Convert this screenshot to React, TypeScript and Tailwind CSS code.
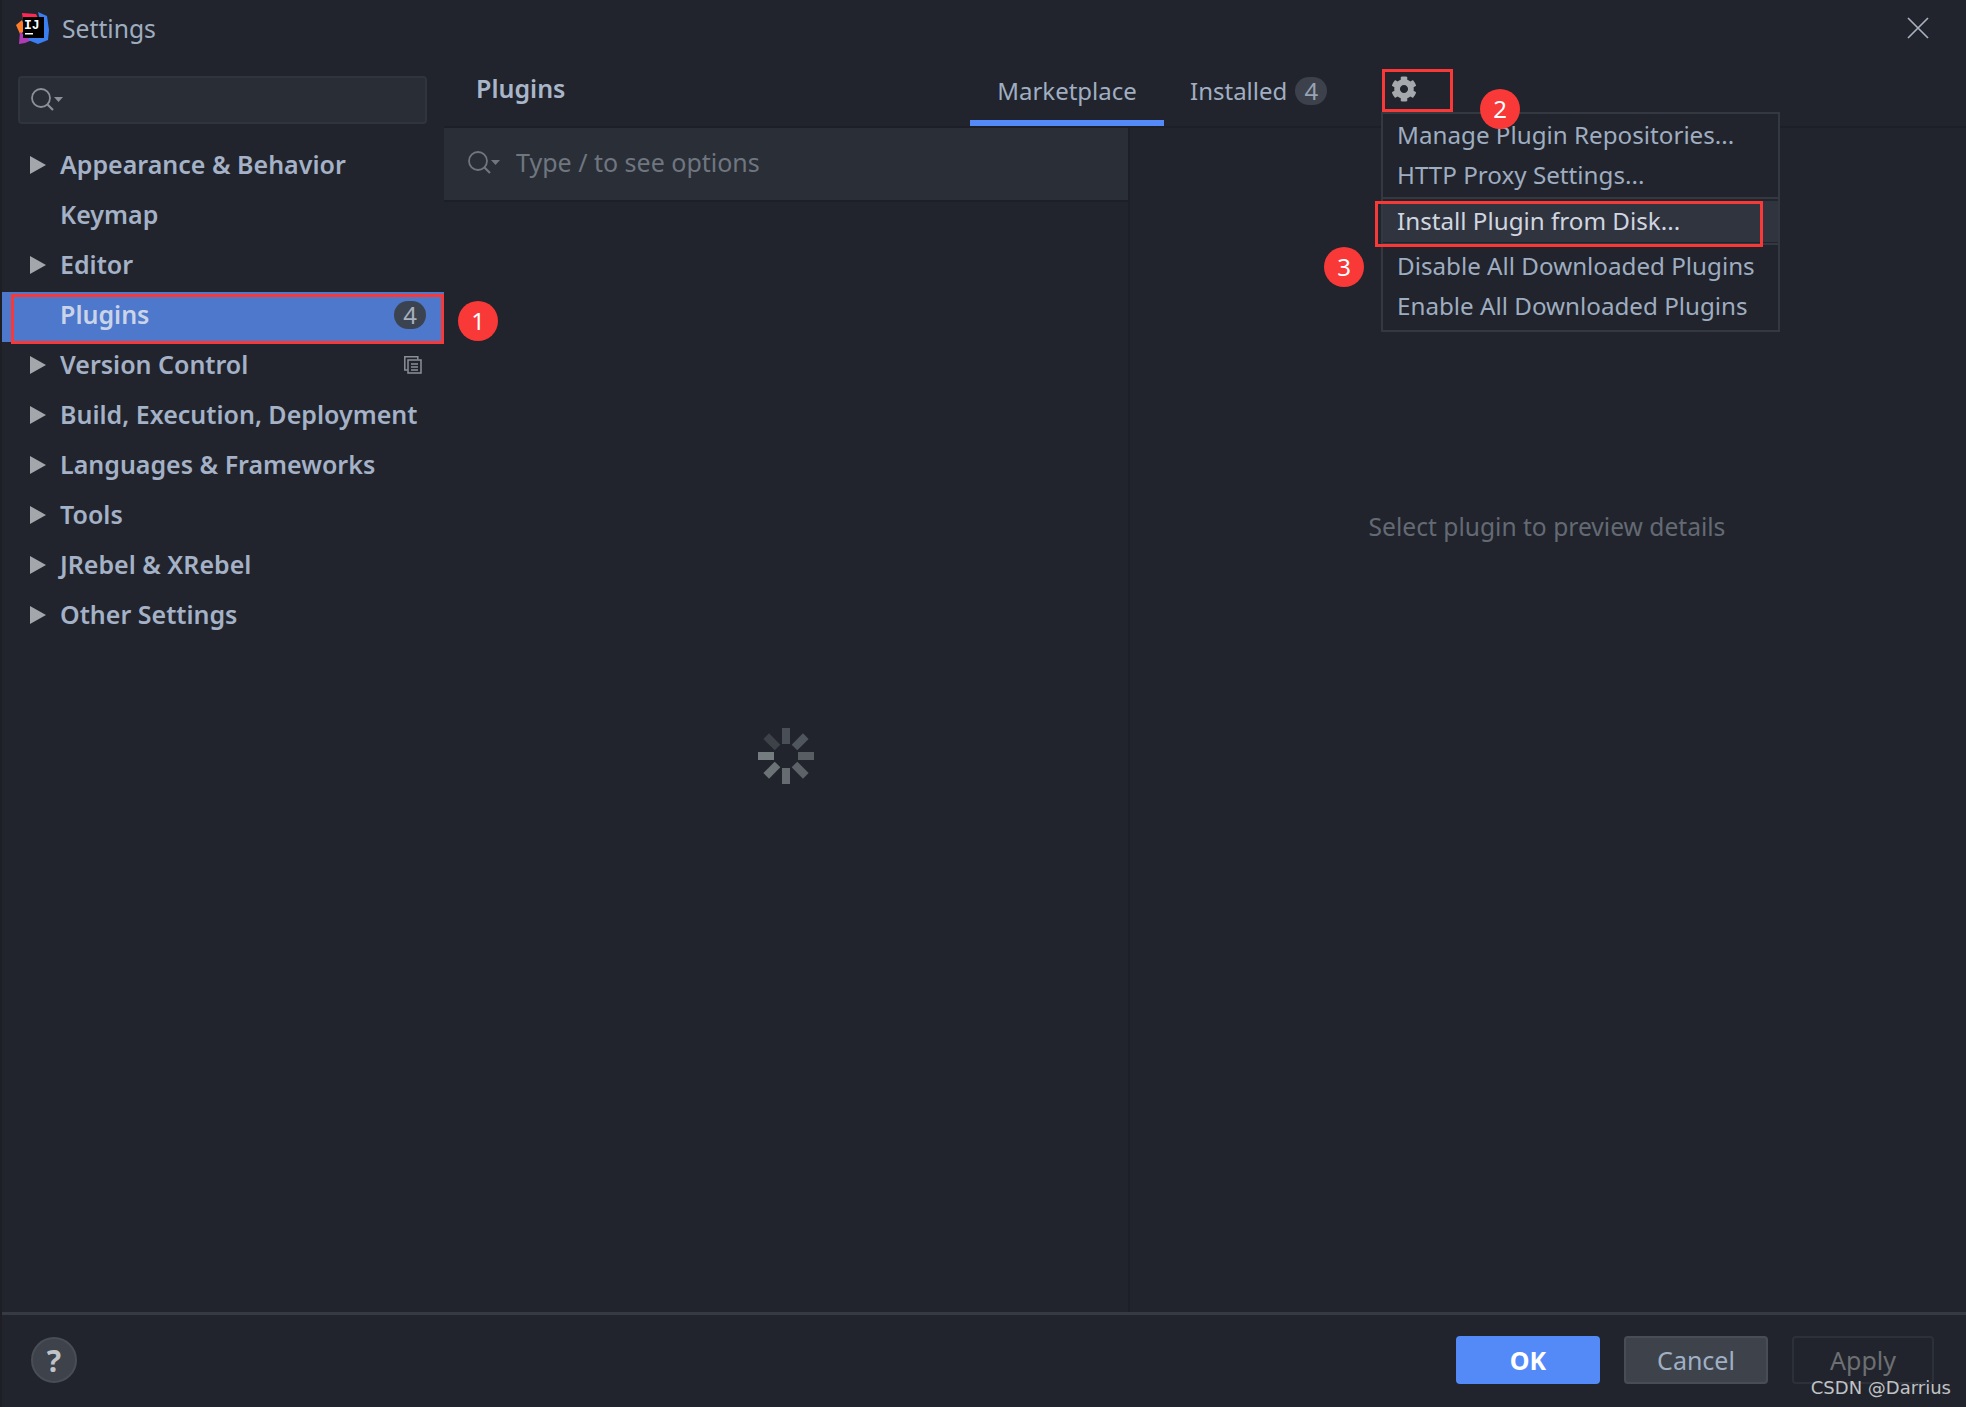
import { FaCog } from 'react-icons/fa'

const items = [
  { label: 'Appearance & Behavior', arrow: true },
  { label: 'Keymap', arrow: false },
  { label: 'Editor', arrow: true },
  { label: 'Plugins', arrow: false, selected: true },
  { label: 'Version Control', arrow: true, copy: true },
  { label: 'Build, Execution, Deployment', arrow: true },
  { label: 'Languages & Frameworks', arrow: true },
  { label: 'Tools', arrow: true },
  { label: 'JRebel & XRebel', arrow: true },
  { label: 'Other Settings', arrow: true },
]

const spokes = [
  { angle: 0, color: '#4a4f57' },
  { angle: 45, color: '#50565d' },
  { angle: 90, color: '#575d63' },
  { angle: 135, color: '#5c6268' },
  { angle: 180, color: '#656b70' },
  { angle: 225, color: '#6c7377' },
  { angle: 270, color: '#757c80' },
  { angle: 315, color: '#3d4249' },
]

function SearchIcon({ color }: { color: string }) {
  return (
    <svg width="34" height="26" viewBox="0 0 34 26" fill="none" aria-hidden="true">
      <circle cx="11" cy="11" r="9" stroke={color} strokeWidth="1.8" />
      <path d="M17 17l6 6" stroke={color} strokeWidth="2.200" />
      <path d="M24 10h9l-4.500 5z" fill={color} />
    </svg>
  )
}

function Logo() {
  return (
    <svg width="34" height="34" viewBox="0 0 34 34" aria-hidden="true">
      <path d="M6 2l14 1 3 6-15 6z" fill="#fe2857" />
      <path d="M0 14l6-5 4 10-6 4z" fill="#fe7d2b" />
      <path d="M3 33l1-12 12 8-7 3z" fill="#b13bb5" />
      <path d="M22 1l9 4 2 14-1 10-10 4-10-4 12-20z" fill="#3a7ef0" />
      <rect x="7" y="6" width="21" height="21" fill="#000" />
      <text x="8" y="18" fill="#fff" fontSize="13" fontWeight="700" fontFamily="'Liberation Mono', monospace">
        IJ
      </text>
      <rect x="9" y="22" width="8" height="1.500" fill="#fff" />
    </svg>
  )
}

function Marker({ n, className }: { n: number; className: string }) {
  return (
    <div className={`absolute flex h-[40px] w-[40px] items-center justify-center rounded-full bg-[#f93838] text-[24px] text-white ${className}`}>
      {n}
    </div>
  )
}

export default function App() {
  return (
    <div className="relative flex h-[1407px] w-[1966px] flex-col overflow-hidden border-l-2 border-[#1d1f25] bg-[#21242c] font-['Noto_Sans',sans-serif] text-[25px] text-[#a4b1c6]">
      {/* title bar */}
      <div className="flex h-[56px] shrink-0 items-center pl-[14px] pr-[37px]">
        <Logo />
        <span className="ml-[12px] pt-[1px] text-[24.700px] text-[#9fadc0]">Settings</span>
        <svg className="ml-auto" width="22" height="22" viewBox="0 0 22 22" aria-hidden="true">
          <path d="M1 1l20 20M21 1L1 21" stroke="#a9b1bc" strokeWidth="1.700" />
        </svg>
      </div>

      <div className="flex min-h-0 flex-1">
        {/* sidebar */}
        <div className="flex w-[442px] shrink-0 flex-col pt-[20px]">
          <div className="ml-[16px] mr-[17px] flex h-[48px] items-center rounded-[4px] border-2 border-[#30343d] bg-[#292d36] pl-[10px]">
            <SearchIcon color="#8c9198" />
          </div>
          <div className="mt-[18px]">
            {items.map((item) => (
              <div
                key={item.label}
                className={`flex h-[50px] items-center pb-1 font-semibold ${item.selected ? 'bg-[#4d78cc] text-[#c9d4e8]' : ''}`}
              >
                <div className="w-[58px] shrink-0 pl-[28px]">
                  {item.arrow && (
                    <svg width="16" height="18" viewBox="0 0 16 18" aria-hidden="true">
                      <path d="M0 0l16 9-16 9z" fill="#a3a6aa" />
                    </svg>
                  )}
                </div>
                <span>{item.label}</span>
                {item.selected && (
                  <span className="ml-auto mr-[18px] flex h-[28px] w-[32px] items-center justify-center rounded-full bg-[#3c4350] text-[24px] font-normal text-[#a7b0be]">
                    4
                  </span>
                )}
                {item.copy && (
                  <svg className="ml-auto mr-[22px]" width="18" height="18" viewBox="0 0 18 18" fill="none" aria-hidden="true">
                    <path d="M3.500 14H.8V.8h13v2.700" stroke="#8b9098" strokeWidth="1.500" />
                    <rect x="4" y="4" width="13" height="13" stroke="#8b9098" strokeWidth="1.500" />
                    <path d="M7 8h7M7 11h7M7 14h7" stroke="#8b9098" strokeWidth="1.300" />
                  </svg>
                )}
              </div>
            ))}
          </div>
        </div>

        {/* main */}
        <div className="flex min-w-0 flex-1 flex-col">
          <div className="flex h-[72px] shrink-0 border-b-2 border-[#1c1f25]">
            <div className="w-[526px] shrink-0 pl-[32px] pt-[14px] font-semibold text-[#a9b6ca]">Plugins</div>
            <div className="flex w-[194px] shrink-0 items-center justify-center border-b-[6px] border-[#548af7] pt-[6px] text-[24px] text-[#a0aec2]">
              Marketplace
            </div>
            <div className="flex items-center pb-[1px] pl-[26px] text-[24px] text-[#a0aec2]">
              Installed
              <span className="ml-[8px] flex h-[28px] w-[32px] items-center justify-center rounded-full bg-[#3c414c] text-[24px] text-[#98a3b4]">
                4
              </span>
            </div>
            <div className="ml-[64px] flex items-center pb-[4px] text-[#a5a8ac]">
              <FaCog size={26} />
            </div>
          </div>

          <div className="flex min-h-0 flex-1">
            <div className="flex w-[686px] shrink-0 flex-col border-r-2 border-[#1c1f25]">
              <div className="flex h-[74px] shrink-0 items-center border-b-2 border-[#1c1f25] bg-[#2a2e37] pb-[2px] pl-[23px] text-[#6f7680]">
                <SearchIcon color="#6f7680" />
                <span className="ml-[15px]">Type / to see options</span>
              </div>
              <div className="flex flex-1 items-center justify-center pb-[2px]">
                <svg width="56" height="56" viewBox="-28 -28 56 56" aria-hidden="true">
                  {spokes.map((s) => (
                    <rect key={s.angle} x="-4" y="-28" width="8" height="16" fill={s.color} transform={`rotate(${s.angle})`} />
                  ))}
                </svg>
              </div>
            </div>
            <div className="flex flex-1 justify-center pr-[2px] pt-[381px] text-[24.600px] text-[#646a74]">
              <span>Select plugin to preview details</span>
            </div>
          </div>
        </div>
      </div>

      {/* footer */}
      <div className="relative flex h-[95px] shrink-0 items-start border-t-[3px] border-[#363a42] pl-[29px] pr-[32px] pt-[21px]">
        <div className="mt-[1px] flex h-[46px] w-[46px] items-center justify-center rounded-full border-2 border-[#484d56] bg-[#3d424b] text-[30px] font-bold text-[#c0c4c8]">
          ?
        </div>
        <div className="ml-auto flex gap-[24px]">
          <button type="button" className="h-[48px] w-[144px] rounded-[4px] bg-[#548af7] pt-[1px] font-bold text-white">
            OK
          </button>
          <button type="button" className="h-[48px] w-[144px] rounded-[4px] border-2 border-[#494d56] bg-[#3e424b] pt-[1px] text-[#9fb0c4]">
            Cancel
          </button>
          <button type="button" className="h-[48px] w-[142px] rounded-[4px] border-2 border-[#2c3038] pt-[1px] text-[#6d6f73]">
            Apply
          </button>
        </div>
        <span className="absolute bottom-[10px] right-[15px] font-['DejaVu_Sans',sans-serif] text-[18px] leading-none text-[#c0c2c5]">
          CSDN @Darrius
        </span>
      </div>

      {/* settings dropdown */}
      <div className="absolute left-[1379px] top-[112px] flex h-[220px] w-[399px] flex-col border-2 border-[#343841] bg-[#21242c] py-[1px] text-[24.200px] text-[#9fadc0]">
        <div className="flex h-[40px] items-center pl-[14px]">Manage Plugin Repositories...</div>
        <div className="flex h-[40px] items-center pl-[14px]">HTTP Proxy Settings...</div>
        <div className="my-[2px] h-[2px] bg-[#343841]" />
        <div className="flex h-[41px] items-center bg-[#30343f] pl-[14px] text-[#d0d6e0]">Install Plugin from Disk...</div>
        <div className="my-[1px] h-[2px] bg-[#343841]" />
        <div className="flex h-[40px] items-center pl-[14px]">Disable All Downloaded Plugins</div>
        <div className="flex h-[40px] items-center pl-[14px]">Enable All Downloaded Plugins</div>
      </div>

      {/* annotations */}
      <div className="absolute left-[9px] top-[294px] h-[50px] w-[433px] border-[3px] border-[#f93838]" />
      <div className="absolute left-[1380px] top-[69px] h-[43px] w-[71px] border-[3px] border-[#f93838]" />
      <div className="absolute left-[1373px] top-[201px] h-[46px] w-[388px] border-[3px] border-[#f93838]" />
      <Marker n={1} className="left-[456px] top-[301px]" />
      <Marker n={2} className="left-[1478px] top-[89px]" />
      <Marker n={3} className="left-[1322px] top-[247px]" />
    </div>
  )
}
